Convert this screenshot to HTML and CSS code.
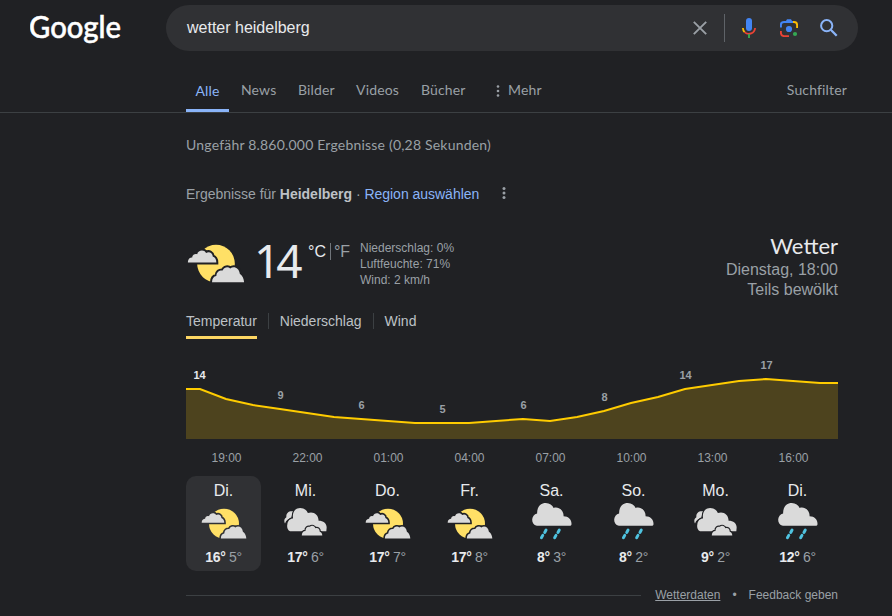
FILE: index.html
```
<!DOCTYPE html>
<html lang="de">
<head>
<meta charset="utf-8">
<title>wetter heidelberg</title>
<link rel="stylesheet" href="styles.css">
</head>
<body>
<svg class="defs" aria-hidden="true">
  <symbol id="partly" viewBox="0 0 174 118">
    <circle cx="87" cy="59.500" r="57" fill="#ffe066"/>
    <path class="cut" d="M-6 56C2 45 9 41 15 41C15 32 24 28 30 31C33 17 52 16 57 27C66 21 77 27 77 38C84 40 88 47 88 56Z"/>
    <path class="cut" d="M75 116C75 105 80 98 88 97C89 84 97 79 107 80C112 69 124 68 130 74C141 66 157 72 159 90C168 96 171 105 172 116Z"/>
    <path fill="#dadada" d="M2 56C2 45 9 41 15 41C15 32 24 28 30 31C33 17 52 16 57 27C66 21 77 27 77 38C84 40 88 47 88 56Z"/>
    <path fill="#dadada" d="M75 116C75 105 80 98 88 97C89 84 97 79 107 80C112 69 124 68 130 74C141 66 157 72 159 90C168 96 171 105 172 116Z"/>
  </symbol>
  <symbol id="cloudy" viewBox="0 0 128 83">
    <path fill="#dadada" d="M3 46C-1 39 1 30 7 27C6 15 14 8 27 10L22 28C14 31 6 36 3 46Z"/>
    <path class="cut thin" d="M20 69C11 66 8 56 10 48C11 38 18 31 27 31C24 12 34 0 48 0C60 0 68 7 71 15C86 9 103 18 103 38C117 38 127 46 127 58L126 69Z"/>
    <path fill="#dadada" d="M18 69C11 66 8 56 10 48C11 38 18 31 27 31C24 12 34 0 48 0C60 0 68 7 71 15C86 9 103 18 103 38C117 38 127 46 127 58L126 69Z"/>
    <path class="cut thin" d="M53 82C53 73 57 68 64 68C64 59 70 54 77 56C83 50 92 54 93 60C101 57 107 63 106 70C111 72 114 76 114 82Z"/>
    <path fill="#dadada" d="M53 82C53 73 57 68 64 68C64 59 70 54 77 56C83 50 92 54 93 60C101 57 107 63 106 70C111 72 114 76 114 82Z"/>
  </symbol>
  <symbol id="rain" viewBox="0 0 120 112">
    <path fill="#dadada" d="M14 69C4 67 0 60 0 51C0 42 6 34 15 32C14 12 26 0 41 0C53 0 61 7 65 15C80 10 96 22 95 40C110 40 119 50 119 62L119 65Q118 69 115 69Z"/>
    <path fill="none" stroke="#4fc3e0" stroke-width="9" stroke-linecap="round" d="M42 82L38 89M32 98L28 105M82 82L78 89M72 98L68 105"/>
  </symbol>
</svg>

<header class="top">
  <svg class="logo" width="96" height="56" viewBox="0 0 96 56"><text x="-1" y="38" textLength="92" lengthAdjust="spacingAndGlyphs">Google</text></svg>
  <div class="search">
    <span class="query">wetter heidelberg</span>
    <svg class="clear" width="14" height="14" viewBox="0 0 14 14"><path d="M.8.800L13.200 13.200M13.200.800L.8 13.200" stroke="#9aa0a6" stroke-width="1.900"/></svg>
    <span class="split"></span>
    <svg class="mic" width="14" height="20" viewBox="0 0 14 20">
      <rect x="4" y="0" width="6" height="13" rx="3" fill="#4285f4"/>
      <path d="M.9 10A6.200 6.200 0 0 0 2.600 14.100" fill="none" stroke="#fbbc04" stroke-width="1.800"/>
      <path d="M2.600 14.100A6.200 6.200 0 0 0 13.100 10" fill="none" stroke="#ea4335" stroke-width="1.800"/>
      <path d="M7 16V20" stroke="#34a853" stroke-width="1.900"/>
    </svg>
    <svg class="lens" width="18" height="18" viewBox="0 0 18 18">
      <path d="M.9 8.500V6Q.9 3 4 3H6" fill="none" stroke="#4285f4" stroke-width="2"/>
      <path d="M5 4V2H6L7 .3H11L12 2H13V4Z" fill="#4285f4"/>
      <path d="M13 3H14Q17.100 3 17.100 6V9" fill="none" stroke="#fbbc04" stroke-width="1.900"/>
      <path d="M.9 12V14Q.9 17.100 4 17.100H9" fill="none" stroke="#ea4335" stroke-width="1.900"/>
      <circle cx="9" cy="10" r="3.100" fill="#4285f4"/><circle cx="15" cy="15" r="2.100" fill="#34a853"/>
    </svg>
    <svg class="find" width="18" height="18" viewBox="0 0 18 18"><circle cx="6.700" cy="6.700" r="5.600" fill="none" stroke="#8ab4f8" stroke-width="2"/><path d="M10.800 10.800L16.700 16.700" stroke="#8ab4f8" stroke-width="2.300"/></svg>
  </div>
</header>

<nav class="tabs">
  <a class="tab active">Alle</a>
  <a class="tab news">News</a>
  <a class="tab bilder">Bilder</a>
  <a class="tab videos">Videos</a>
  <a class="tab buecher">Bücher</a>
  <svg class="dots" width="4" height="12" viewBox="0 0 4 12" fill="#9aa0a6"><circle cx="2" cy="1.500" r="1.300"/><circle cx="2" cy="6" r="1.300"/><circle cx="2" cy="10.500" r="1.300"/></svg>
  <a class="tab mehr">Mehr</a>
  <a class="tab filter">Suchfilter</a>
</nav>

<main>
  <p class="stats">Ungefähr 8.860.000 Ergebnisse (0,28 Sekunden)</p>
  <div class="region"><span>Ergebnisse für <b>Heidelberg</b> · <a>Region auswählen</a></span>
    <svg width="4" height="12" viewBox="0 0 4 12" fill="#9aa0a6"><circle cx="2" cy="1.500" r="1.500"/><circle cx="2" cy="6" r="1.500"/><circle cx="2" cy="10.500" r="1.500"/></svg>
  </div>

  <section class="now">
    <svg class="now-icon" width="58" height="39"><use href="#partly"/></svg>
    <span class="degrees">14</span>
    <span class="units"><b>°C</b><i></i><span>°F</span></span>
    <div class="facts"><div>Niederschlag: 0%</div><div>Luftfeuchte: 71%</div><div>Wind: 2 km/h</div></div>
    <div class="summary"><h1>Wetter</h1><div>Dienstag, 18:00</div><div>Teils bewölkt</div></div>
  </section>

  <div class="modes"><a class="on">Temperatur</a><i></i><a>Niederschlag</a><i></i><a>Wind</a></div>

  <svg class="chart" width="652" height="121" viewBox="186 350 652 121">
    <path fill="#4d431e" d="M186 389H200L226 399L253 405L280 409L307 413L334 417L361 419L388 421L415 423H469L496 421L523 419L550 421L577 417L604 411L631 403L658 397L685 389L712 385L739 381L766 379L793 381L820 383H838V439H186Z"/>
    <path fill="none" stroke="#fc0" stroke-width="2" d="M186 389H200L226 399L253 405L280 409L307 413L334 417L361 419L388 421L415 423H469L496 421L523 419L550 421L577 417L604 411L631 403L658 397L685 389L712 385L739 381L766 379L793 381L820 383H838"/>
    <g class="values"><text class="current" x="199.500" y="379">14</text><text x="280.500" y="399">9</text><text x="361.500" y="409">6</text><text x="442.500" y="413">5</text><text x="523.500" y="409">6</text><text x="604.500" y="401">8</text><text x="685.500" y="379">14</text><text x="766.500" y="369">17</text></g>
    <g class="hours"><text x="226.500" y="462">19:00</text><text x="307.500" y="462">22:00</text><text x="388.500" y="462">01:00</text><text x="469.500" y="462">04:00</text><text x="550.500" y="462">07:00</text><text x="631.500" y="462">10:00</text><text x="712.500" y="462">13:00</text><text x="793.500" y="462">16:00</text></g>
  </svg>

  <section class="days">
    <div class="day selected"><span class="name">Di.</span><svg class="partly"><use href="#partly"/></svg><span class="range"><b>16°</b> 5°</span></div>
    <div class="day"><span class="name">Mi.</span><svg class="cloudy"><use href="#cloudy"/></svg><span class="range"><b>17°</b> 6°</span></div>
    <div class="day"><span class="name">Do.</span><svg class="partly"><use href="#partly"/></svg><span class="range"><b>17°</b> 7°</span></div>
    <div class="day"><span class="name">Fr.</span><svg class="partly"><use href="#partly"/></svg><span class="range"><b>17°</b> 8°</span></div>
    <div class="day"><span class="name">Sa.</span><svg class="rain"><use href="#rain"/></svg><span class="range"><b>8°</b> 3°</span></div>
    <div class="day"><span class="name">So.</span><svg class="rain"><use href="#rain"/></svg><span class="range"><b>8°</b> 2°</span></div>
    <div class="day"><span class="name">Mo.</span><svg class="cloudy"><use href="#cloudy"/></svg><span class="range"><b>9°</b> 2°</span></div>
    <div class="day"><span class="name">Di.</span><svg class="rain"><use href="#rain"/></svg><span class="range"><b>12°</b> 6°</span></div>
  </section>

  <footer><span class="rule"></span><a class="source">Wetterdaten</a><span class="bullet">•</span><a>Feedback geben</a></footer>
</main>
</body>
</html>
```
FILE: styles.css
```
* { box-sizing: border-box; }
html, body { margin: 0; }
body {
  --bg: #202124;
  width: 892px;
  height: 616px;
  overflow: hidden;
  background: var(--bg);
  color: #9aa0a6;
  font: 14px/20px "Liberation Sans", Arial, sans-serif;
}
svg { display: block; flex: none; }
.defs { position: absolute; width: 0; height: 0; }
.cut { fill: var(--bg); stroke: var(--bg); stroke-width: 12; }
.cut.thin { stroke-width: 7; }

.top { display: flex; padding: 0 34px 0 30px; height: 72px; }
.logo text { font: 500 30px Lato, sans-serif; fill: #fff; stroke: #fff; stroke-width: .5px; }
.search {
  display: flex;
  align-items: center;
  width: 692px;
  height: 46px;
  margin: 5px 0 0 40px;
  padding: 0 20px 0 21px;
  border-radius: 23px;
  background: #303134;
}
.query { flex: 1; color: #e8eaed; font-size: 16px; }
.split { width: 1px; height: 28px; margin: 0 17px; background: #5f6368; }
.lens { margin: 0 22px 0 24px; }

.tabs {
  display: flex;
  height: 41px;
  padding-left: 186px;
  border-bottom: 1px solid #3c4043;
  font-family: Lato, sans-serif;
  line-height: 36px;
}
.tab { white-space: nowrap; letter-spacing: .15px; }
.active { width: 43px; height: 40px; padding-top: 1px; border-bottom: 3px solid #8ab4f8; color: #8ab4f8; text-align: center; }
.news { width: 57px; margin-left: 12px; }
.bilder { width: 58px; }
.videos { width: 65px; }
.buecher { width: 75px; }
.dots { margin-top: 13px; }
.mehr { margin-left: 8px; }
.filter { margin: 0 45px 0 auto; }

main { width: 652px; margin-left: 186px; }
.stats { margin: 0; padding-top: 22px; font-family: Lato, sans-serif; letter-spacing: .2px; }
.region { display: flex; margin-top: 29px; }
.region span { letter-spacing: -.02px; }
.region b { color: #bdc1c6; }
.region a { color: #8ab4f8; }
.region svg { margin: 3px 0 0 23px; }

.now { display: flex; height: 77px; margin-top: 30px; }
.now-icon { margin: 10px 0 0 1px; }
.degrees { width: 50px; margin: -2px 0 0 9px; color: #e8eaed; font: 46px/56px "Noto Sans", sans-serif; letter-spacing: -4px; }
.units { display: flex; width: 46px; margin: 8px 0 0 4px; font-size: 16px; }
.units b { color: #e8eaed; font-weight: 400; }
.units i { width: 1px; height: 17px; margin: 1px 3px 0 4px; background: #70757a; }
.facts { margin: 6px 0 0 6px; font-size: 12px; line-height: 16px; }
.summary { margin-left: auto; text-align: right; font-size: 16px; }
.summary h1 { margin: -1px 0 1px; color: #e8eaed; font: 22px/26px Lato, sans-serif; }

.modes { display: flex; height: 39px; color: #bdc1c6; }
.modes a { height: 28px; }
.modes .on { border-bottom: 3px solid #fdd663; }
.modes i { width: 1px; height: 16px; margin: 2px 11px 0; background: #3c4043; }
.chart text { text-anchor: middle; }
.values { font-size: 11px; font-weight: 700; fill: #9aa0a6; }
.values .current { fill: #e8eaed; }
.hours { font-size: 12px; fill: #9aa0a6; }

.days { display: flex; gap: 7px; margin-top: 5px; }
.day { display: flex; flex-direction: column; align-items: center; width: 75px; height: 95px; padding-top: 5px; border-radius: 10px; }
.selected { --bg: #303134; background: var(--bg); }
.name { color: #e8eaed; font-size: 16px; line-height: 20px; }
.partly { width: 46px; height: 31px; margin: 7px 0 8px 1px; }
.cloudy { width: 43px; height: 28px; margin: 7px 0 11px; }
.rain { width: 40px; height: 37px; margin: 2px 0 7px; }
.range { line-height: 20px; font-size: 14px; letter-spacing: -.3px; }
.range b { color: #e8eaed; }

footer { display: flex; align-items: center; height: 20px; margin-top: 14px; font-size: 12px; white-space: nowrap; }
.rule { flex: 1; height: 1px; margin-right: 14px; background: #3c4043; }
.source { text-decoration: underline; }
.bullet { margin: 0 12px; }
```
